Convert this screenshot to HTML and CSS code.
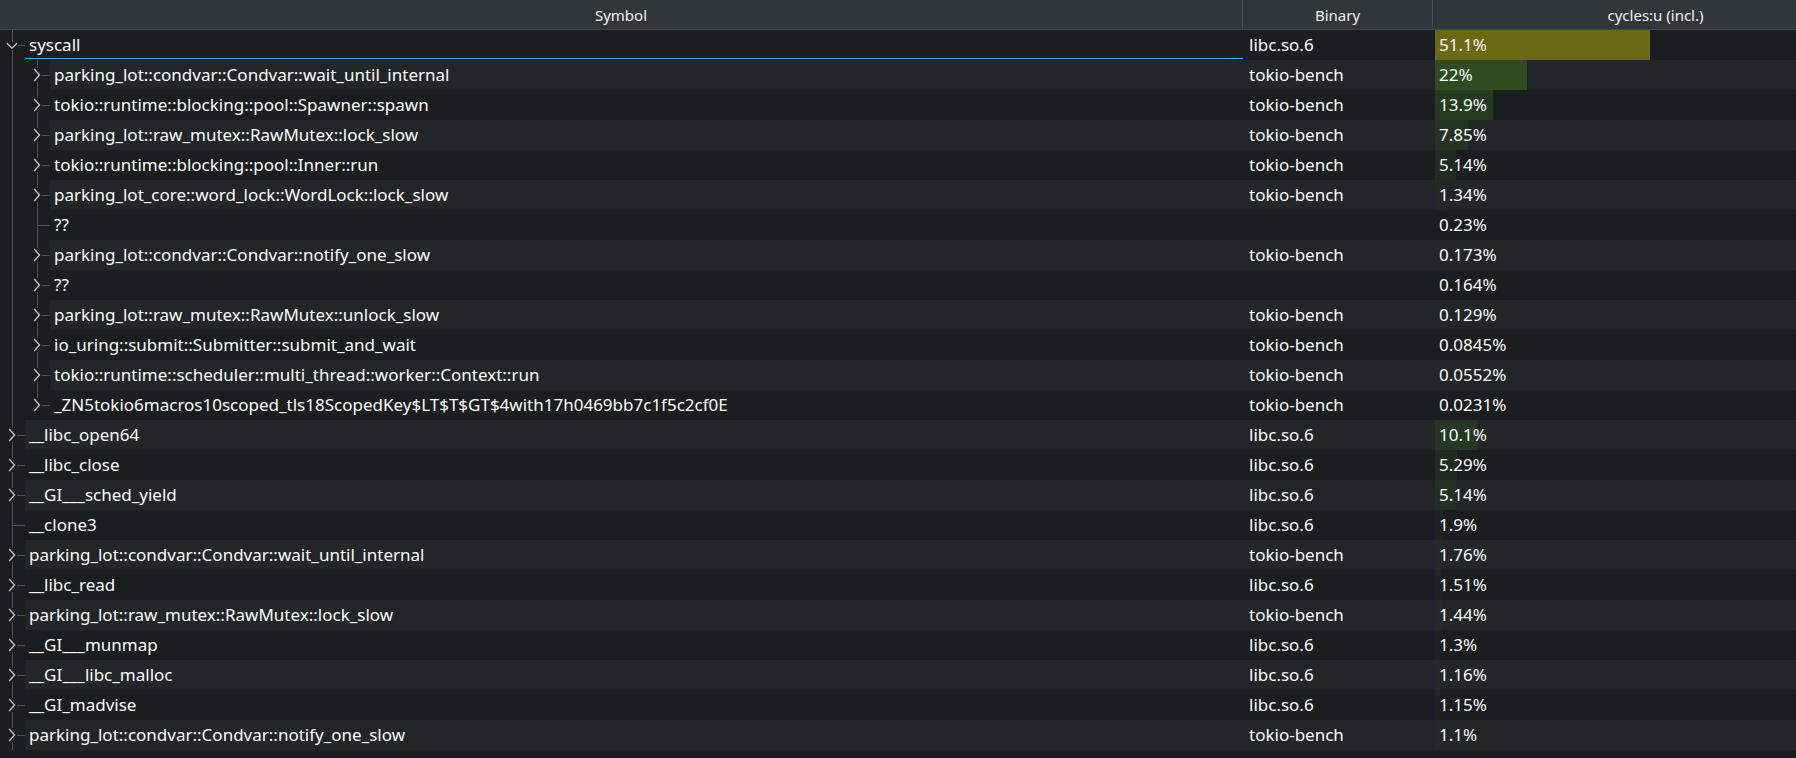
FILE: index.html
```html
<!DOCTYPE html>
<html>
<head>
<meta charset="utf-8">
<link rel="stylesheet" href="styles.css">
</head>
<body>
<div class="view">
  <div class="header">
    <div class="hcell c-sym">Symbol</div>
    <div class="hcell c-bin">Binary</div>
    <div class="hcell c-cyc">cycles:u (incl.)</div>
  </div>

  <div class="row">
    <div class="c-sym sym">
      <div class="guide line"><svg class="chev" width="12" height="8" viewBox="0 0 12 8"><path d="M1 1.2 L6 6.2 L11 1.2"/></svg><span class="tick"></span></div>
      <div class="label current">syscall</div>
    </div>
    <div class="c-bin bin">libc.so.6</div>
    <div class="c-cyc cyc"><span class="bar" style="width:215px;background:#6b6914"></span><span class="val">51.1%</span></div>
  </div>

  <div class="row alt">
    <div class="c-sym sym">
      <div class="guide line"></div>
      <div class="guide line"><svg class="chev" width="8" height="14" viewBox="0 0 8 14"><path d="M1.2 1 L6.6 7 L1.2 13"/></svg><span class="tick"></span></div>
      <div class="label">parking_lot::condvar::Condvar::wait_until_internal</div>
    </div>
    <div class="c-bin bin">tokio-bench</div>
    <div class="c-cyc cyc"><span class="bar" style="width:92px;background:#2f4b22"></span><span class="val">22%</span></div>
  </div>

  <div class="row">
    <div class="c-sym sym">
      <div class="guide line"></div>
      <div class="guide line"><svg class="chev" width="8" height="14" viewBox="0 0 8 14"><path d="M1.2 1 L6.6 7 L1.2 13"/></svg><span class="tick"></span></div>
      <div class="label">tokio::runtime::blocking::pool::Spawner::spawn</div>
    </div>
    <div class="c-bin bin">tokio-bench</div>
    <div class="c-cyc cyc"><span class="bar" style="width:58px;background:#243b20"></span><span class="val">13.9%</span></div>
  </div>

  <div class="row alt">
    <div class="c-sym sym">
      <div class="guide line"></div>
      <div class="guide line"><svg class="chev" width="8" height="14" viewBox="0 0 8 14"><path d="M1.2 1 L6.6 7 L1.2 13"/></svg><span class="tick"></span></div>
      <div class="label">parking_lot::raw_mutex::RawMutex::lock_slow</div>
    </div>
    <div class="c-bin bin">tokio-bench</div>
    <div class="c-cyc cyc"><span class="bar" style="width:33px;background:#233422"></span><span class="val">7.85%</span></div>
  </div>

  <div class="row">
    <div class="c-sym sym">
      <div class="guide line"></div>
      <div class="guide line"><svg class="chev" width="8" height="14" viewBox="0 0 8 14"><path d="M1.2 1 L6.6 7 L1.2 13"/></svg><span class="tick"></span></div>
      <div class="label">tokio::runtime::blocking::pool::Inner::run</div>
    </div>
    <div class="c-bin bin">tokio-bench</div>
    <div class="c-cyc cyc"><span class="bar" style="width:21px;background:#202c1f"></span><span class="val">5.14%</span></div>
  </div>

  <div class="row alt">
    <div class="c-sym sym">
      <div class="guide line"></div>
      <div class="guide line"><svg class="chev" width="8" height="14" viewBox="0 0 8 14"><path d="M1.2 1 L6.6 7 L1.2 13"/></svg><span class="tick"></span></div>
      <div class="label">parking_lot_core::word_lock::WordLock::lock_slow</div>
    </div>
    <div class="c-bin bin">tokio-bench</div>
    <div class="c-cyc cyc"><span class="bar" style="width:6px;background:#242a24"></span><span class="val">1.34%</span></div>
  </div>

  <div class="row">
    <div class="c-sym sym">
      <div class="guide line"></div>
      <div class="guide line"><span class="tick leaf"></span></div>
      <div class="label">??</div>
    </div>
    <div class="c-bin bin"></div>
    <div class="c-cyc cyc"><span class="val">0.23%</span></div>
  </div>

  <div class="row alt">
    <div class="c-sym sym">
      <div class="guide line"></div>
      <div class="guide line"><svg class="chev" width="8" height="14" viewBox="0 0 8 14"><path d="M1.2 1 L6.6 7 L1.2 13"/></svg><span class="tick"></span></div>
      <div class="label">parking_lot::condvar::Condvar::notify_one_slow</div>
    </div>
    <div class="c-bin bin">tokio-bench</div>
    <div class="c-cyc cyc"><span class="val">0.173%</span></div>
  </div>

  <div class="row">
    <div class="c-sym sym">
      <div class="guide line"></div>
      <div class="guide line"><svg class="chev" width="8" height="14" viewBox="0 0 8 14"><path d="M1.2 1 L6.6 7 L1.2 13"/></svg><span class="tick"></span></div>
      <div class="label">??</div>
    </div>
    <div class="c-bin bin"></div>
    <div class="c-cyc cyc"><span class="val">0.164%</span></div>
  </div>

  <div class="row alt">
    <div class="c-sym sym">
      <div class="guide line"></div>
      <div class="guide line"><svg class="chev" width="8" height="14" viewBox="0 0 8 14"><path d="M1.2 1 L6.6 7 L1.2 13"/></svg><span class="tick"></span></div>
      <div class="label">parking_lot::raw_mutex::RawMutex::unlock_slow</div>
    </div>
    <div class="c-bin bin">tokio-bench</div>
    <div class="c-cyc cyc"><span class="val">0.129%</span></div>
  </div>

  <div class="row">
    <div class="c-sym sym">
      <div class="guide line"></div>
      <div class="guide line"><svg class="chev" width="8" height="14" viewBox="0 0 8 14"><path d="M1.2 1 L6.6 7 L1.2 13"/></svg><span class="tick"></span></div>
      <div class="label">io_uring::submit::Submitter::submit_and_wait</div>
    </div>
    <div class="c-bin bin">tokio-bench</div>
    <div class="c-cyc cyc"><span class="val">0.0845%</span></div>
  </div>

  <div class="row alt">
    <div class="c-sym sym">
      <div class="guide line"></div>
      <div class="guide line"><svg class="chev" width="8" height="14" viewBox="0 0 8 14"><path d="M1.2 1 L6.6 7 L1.2 13"/></svg><span class="tick"></span></div>
      <div class="label">tokio::runtime::scheduler::multi_thread::worker::Context::run</div>
    </div>
    <div class="c-bin bin">tokio-bench</div>
    <div class="c-cyc cyc"><span class="val">0.0552%</span></div>
  </div>

  <div class="row">
    <div class="c-sym sym">
      <div class="guide line"></div>
      <div class="guide line half"><svg class="chev" width="8" height="14" viewBox="0 0 8 14"><path d="M1.2 1 L6.6 7 L1.2 13"/></svg><span class="tick"></span></div>
      <div class="label">_ZN5tokio6macros10scoped_tls18ScopedKey$LT$T$GT$4with17h0469bb7c1f5c2cf0E</div>
    </div>
    <div class="c-bin bin">tokio-bench</div>
    <div class="c-cyc cyc"><span class="val">0.0231%</span></div>
  </div>

  <div class="row alt">
    <div class="c-sym sym">
      <div class="guide line"><svg class="chev" width="8" height="14" viewBox="0 0 8 14"><path d="M1.2 1 L6.6 7 L1.2 13"/></svg><span class="tick"></span></div>
      <div class="label">__libc_open64</div>
    </div>
    <div class="c-bin bin">libc.so.6</div>
    <div class="c-cyc cyc"><span class="bar" style="width:42px;background:#243824"></span><span class="val">10.1%</span></div>
  </div>

  <div class="row">
    <div class="c-sym sym">
      <div class="guide line"><svg class="chev" width="8" height="14" viewBox="0 0 8 14"><path d="M1.2 1 L6.6 7 L1.2 13"/></svg><span class="tick"></span></div>
      <div class="label">__libc_close</div>
    </div>
    <div class="c-bin bin">libc.so.6</div>
    <div class="c-cyc cyc"><span class="bar" style="width:22px;background:#202b20"></span><span class="val">5.29%</span></div>
  </div>

  <div class="row alt">
    <div class="c-sym sym">
      <div class="guide line"><svg class="chev" width="8" height="14" viewBox="0 0 8 14"><path d="M1.2 1 L6.6 7 L1.2 13"/></svg><span class="tick"></span></div>
      <div class="label">__GI___sched_yield</div>
    </div>
    <div class="c-bin bin">libc.so.6</div>
    <div class="c-cyc cyc"><span class="bar" style="width:21px;background:#252f25"></span><span class="val">5.14%</span></div>
  </div>

  <div class="row">
    <div class="c-sym sym">
      <div class="guide line"><span class="tick leaf"></span></div>
      <div class="label">__clone3</div>
    </div>
    <div class="c-bin bin">libc.so.6</div>
    <div class="c-cyc cyc"><span class="bar" style="width:8px;background:#1f241f"></span><span class="val">1.9%</span></div>
  </div>

  <div class="row alt">
    <div class="c-sym sym">
      <div class="guide line"><svg class="chev" width="8" height="14" viewBox="0 0 8 14"><path d="M1.2 1 L6.6 7 L1.2 13"/></svg><span class="tick"></span></div>
      <div class="label">parking_lot::condvar::Condvar::wait_until_internal</div>
    </div>
    <div class="c-bin bin">tokio-bench</div>
    <div class="c-cyc cyc"><span class="bar" style="width:7px;background:#242a24"></span><span class="val">1.76%</span></div>
  </div>

  <div class="row">
    <div class="c-sym sym">
      <div class="guide line"><svg class="chev" width="8" height="14" viewBox="0 0 8 14"><path d="M1.2 1 L6.6 7 L1.2 13"/></svg><span class="tick"></span></div>
      <div class="label">__libc_read</div>
    </div>
    <div class="c-bin bin">libc.so.6</div>
    <div class="c-cyc cyc"><span class="bar" style="width:6px;background:#1f241f"></span><span class="val">1.51%</span></div>
  </div>

  <div class="row alt">
    <div class="c-sym sym">
      <div class="guide line"><svg class="chev" width="8" height="14" viewBox="0 0 8 14"><path d="M1.2 1 L6.6 7 L1.2 13"/></svg><span class="tick"></span></div>
      <div class="label">parking_lot::raw_mutex::RawMutex::lock_slow</div>
    </div>
    <div class="c-bin bin">tokio-bench</div>
    <div class="c-cyc cyc"><span class="bar" style="width:6px;background:#242a24"></span><span class="val">1.44%</span></div>
  </div>

  <div class="row">
    <div class="c-sym sym">
      <div class="guide line"><svg class="chev" width="8" height="14" viewBox="0 0 8 14"><path d="M1.2 1 L6.6 7 L1.2 13"/></svg><span class="tick"></span></div>
      <div class="label">__GI___munmap</div>
    </div>
    <div class="c-bin bin">libc.so.6</div>
    <div class="c-cyc cyc"><span class="bar" style="width:5px;background:#1f241f"></span><span class="val">1.3%</span></div>
  </div>

  <div class="row alt">
    <div class="c-sym sym">
      <div class="guide line"><svg class="chev" width="8" height="14" viewBox="0 0 8 14"><path d="M1.2 1 L6.6 7 L1.2 13"/></svg><span class="tick"></span></div>
      <div class="label">__GI___libc_malloc</div>
    </div>
    <div class="c-bin bin">libc.so.6</div>
    <div class="c-cyc cyc"><span class="bar" style="width:5px;background:#242a24"></span><span class="val">1.16%</span></div>
  </div>

  <div class="row">
    <div class="c-sym sym">
      <div class="guide line"><svg class="chev" width="8" height="14" viewBox="0 0 8 14"><path d="M1.2 1 L6.6 7 L1.2 13"/></svg><span class="tick"></span></div>
      <div class="label">__GI_madvise</div>
    </div>
    <div class="c-bin bin">libc.so.6</div>
    <div class="c-cyc cyc"><span class="bar" style="width:5px;background:#1f241f"></span><span class="val">1.15%</span></div>
  </div>

  <div class="row alt">
    <div class="c-sym sym">
      <div class="guide line"><svg class="chev" width="8" height="14" viewBox="0 0 8 14"><path d="M1.2 1 L6.6 7 L1.2 13"/></svg><span class="tick"></span></div>
      <div class="label">parking_lot::condvar::Condvar::notify_one_slow</div>
    </div>
    <div class="c-bin bin">tokio-bench</div>
    <div class="c-cyc cyc"><span class="bar" style="width:5px;background:#242a24"></span><span class="val">1.1%</span></div>
  </div>
</div>
</body>
</html>
```

FILE: styles.css
```css
html, body {
  margin: 0;
  padding: 0;
  background: #1b1e20;
  overflow: hidden;
}

.view {
  width: 1879px;
  font-family: "Noto Sans", "DejaVu Sans", sans-serif;
  font-size: 17px;
  color: #fcfcfc;
}

.c-sym { width: 1243px; flex: none; }
.c-bin { width: 190px; flex: none; }
.c-cyc { width: 446px; flex: none; }

.header {
  display: flex;
  height: 29px;
  background: #31363b;
  border-bottom: 1px solid #41464b;
}

.hcell {
  display: flex;
  align-items: center;
  justify-content: center;
  color: #eff0f1;
  border-right: 1px solid #4a4f54;
  box-sizing: border-box;
  font-size: 15px;
}

.row {
  display: flex;
  height: 30px;
  line-height: 30px;
  white-space: nowrap;
}

.sym {
  display: flex;
  background: #1b1e20;
}

.guide {
  width: 25px;
  flex: none;
  position: relative;
}

.guide.line::before {
  content: "";
  position: absolute;
  left: 12px;
  top: 0;
  bottom: 0;
  width: 1px;
  background: #4b4f53;
}

.guide.half::before {
  bottom: 50%;
}

.chev {
  position: absolute;
  left: 8px;
  top: 8px;
  z-index: 1;
  background: #1b1e20;
}

.chev path {
  fill: none;
  stroke: #c4c5c6;
  stroke-width: 1.3;
}

.guide svg[width="12"] {
  left: 6px;
  top: 12px;
}

.tick {
  position: absolute;
  left: 17px;
  top: 15px;
  width: 8px;
  height: 1px;
  background: #4b4f53;
}

.tick.leaf {
  left: 12px;
  width: 13px;
}

.label {
  flex: 1;
  padding-left: 4px;
  position: relative;
}

.bin {
  padding-left: 6px;
  box-sizing: border-box;
}

.cyc {
  position: relative;
  padding-left: 6px;
  box-sizing: border-box;
}

.bar {
  position: absolute;
  left: 2px;
  top: 0;
  height: 30px;
}

.val {
  position: relative;
}

.row.alt .label,
.row.alt .bin,
.row.alt .cyc {
  background: #232629;
}

.label.current::after {
  content: "";
  position: absolute;
  left: 0;
  right: 0;
  bottom: 1px;
  height: 1px;
  background: #3daee9;
}
```
